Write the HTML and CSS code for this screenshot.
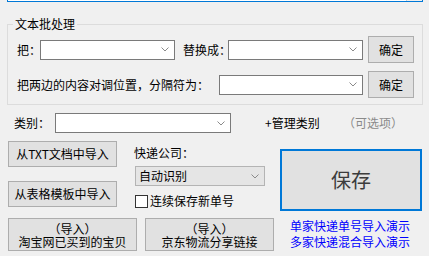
FILE: index.html
```html
<!DOCTYPE html>
<html lang="zh-CN">
<head>
<meta charset="utf-8">
<title>文本批处理</title>
<link rel="stylesheet" href="styles.css">
</head>
<body>
<div class="topbox"><div class="topfill"></div><div class="topside"></div></div>

<fieldset class="group">
  <legend>文本批处理</legend>
  <div class="row">
    <span class="lbl lbl-ba">把：</span>
    <div class="combo w135"><span></span><svg class="chev" width="8" height="5" viewBox="0 0 8 5"><polyline points="0.5,0.5 4,4 7.5,0.5" fill="none" stroke="#8a8a8a" stroke-width="1"/></svg></div>
    <span class="lbl lbl-th">替换成：</span>
    <div class="combo w135"><span></span><svg class="chev" width="8" height="5" viewBox="0 0 8 5"><polyline points="0.5,0.5 4,4 7.5,0.5" fill="none" stroke="#8a8a8a" stroke-width="1"/></svg></div>
    <button class="btn ok">确定</button>
  </div>
  <div class="row row2">
    <span class="lbl lbl-long">把两边的内容对调位置，分隔符为：</span>
    <div class="combo w144"><span></span><svg class="chev" width="8" height="5" viewBox="0 0 8 5"><polyline points="0.5,0.5 4,4 7.5,0.5" fill="none" stroke="#8a8a8a" stroke-width="1"/></svg></div>
    <button class="btn ok">确定</button>
  </div>
</fieldset>

<div class="catrow">
  <span class="lbl lbl-cat">类别：</span>
  <div class="combo w176"><span></span><svg class="chev" width="8" height="5" viewBox="0 0 8 5"><polyline points="0.5,0.5 4,4 7.5,0.5" fill="none" stroke="#8a8a8a" stroke-width="1"/></svg></div>
  <span class="manage">+管理类别</span>
  <span class="optional">（可选项）</span>
</div>

<div class="upper">
  <div class="leftstack">
    <button class="btn imp">从TXT文档中导入</button>
    <button class="btn imp">从表格模板中导入</button>
  </div>
  <div class="midstack">
    <span class="lbl">快递公司：</span>
    <div class="combo dis"><span>自动识别</span><svg class="chev" width="8" height="5" viewBox="0 0 8 5"><polyline points="0.5,0.5 4,4 7.5,0.5" fill="none" stroke="#8a8a8a" stroke-width="1"/></svg></div>
    <label class="check"><span class="box"></span><span>连续保存新单号</span></label>
  </div>
  <button class="btn save">保存</button>
</div>

<div class="lower">
  <button class="btn two"><span class="ln">（导入）</span><span class="ln">淘宝网已买到的宝贝</span></button>
  <button class="btn two"><span class="ln">（导入）</span><span class="ln">京东物流分享链接</span></button>
  <div class="links">
    <a href="#" class="lnk">单家快递单号导入演示</a>
    <a href="#" class="lnk">多家快递混合导入演示</a>
  </div>
</div>
</body>
</html>
```

FILE: styles.css
```css
* { box-sizing: border-box; }
html, body { margin: 0; padding: 0; }
body {
  width: 429px;
  height: 256px;
  overflow: hidden;
  background: #f0f0f0;
  font-family: "Noto Sans CJK SC", "Microsoft YaHei", sans-serif;
  font-size: 12px;
  line-height: 14px;
  color: #000;
}

.topbox {
  margin-left: 7px;
  width: 416px;
  height: 2px;
  border: 1px solid #0078d7;
  border-top: none;
  display: flex;
}
.topfill { flex: 1; background: #fff; }
.topside { width: 16px; background: #f0f0f0; border-left: 1px solid #d0d0d0; }

.group {
  margin: 15px 0 0 7px;
  width: 416px;
  min-width: 0;
  border: 1px solid #dcdcdc;
  padding: 5px 4px 6px 5px;
}
.group legend {
  padding: 0 2px;
  line-height: 14px;
  font-size: 12px;
}

.row {
  display: flex;
  align-items: center;
  height: 27px;
}
.row2 { margin-top: 8px; }

.lbl { white-space: nowrap; flex-shrink: 0; }
.lbl-ba { margin-left: 4px; width: 23px; }
.lbl-th { margin-left: 8px; width: 45px; }
.lbl-long { margin-left: 4px; width: 202px; }
.lbl-cat { margin-left: 14px; width: 41px; }

.combo {
  display: flex;
  align-items: center;
  justify-content: space-between;
  height: 20px;
  background: #fff;
  border: 1px solid #7a7a7a;
  padding: 0 5px 0 3px;
  flex-shrink: 0;
}
.chev { display: block; }
.w135 { width: 135px; }
.w144 { width: 144px; }
.w176 { width: 176px; }

.btn {
  font-family: inherit;
  font-size: 12px;
  line-height: 14px;
  color: #000;
  background: #e1e1e1;
  border: 1px solid #adadad;
  padding: 0;
  margin: 0;
  flex-shrink: 0;
}
.ok { width: 46px; height: 27px; margin-left: 5px; }

.catrow {
  display: flex;
  align-items: center;
  margin-top: 8px;
  height: 20px;
}
.manage { margin-left: 34px; width: 78px; white-space: nowrap; }
.optional { color: #8a8a8a; white-space: nowrap; }

.upper {
  display: flex;
  align-items: flex-start;
  margin-top: 8px;
}
.leftstack {
  margin-left: 8px;
  width: 109px;
  display: flex;
  flex-direction: column;
  gap: 14px;
}
.imp { width: 109px; height: 26px; }

.midstack {
  margin-left: 18px;
  width: 130px;
  display: flex;
  flex-direction: column;
}
.midstack > .lbl { margin-top: 5px; margin-left: -1px; }
.combo.dis {
  margin-top: 6px;
  width: 130px;
  background: #e5e5e5;
  border-color: #b4b4b4;
}
.check {
  display: flex;
  align-items: center;
  margin-top: 8px;
  height: 14px;
}
.box {
  width: 13px;
  height: 13px;
  background: #fff;
  border: 1px solid #333;
  margin-right: 2px;
}

.save {
  margin-left: 15px;
  margin-top: 8px;
  width: 142px;
  height: 62px;
  border: 2px solid #0078d7;
  font-size: 20px;
  line-height: 24px;
  color: #3c3c3c;
}

.lower {
  display: flex;
  align-items: flex-start;
  margin-top: 7px;
}
.two {
  width: 129px;
  height: 33px;
  display: flex;
  flex-direction: column;
  align-items: center;
  justify-content: center;
}
.two .ln {
  display: block;
  line-height: 13px;
  height: 13px;
  white-space: nowrap;
}
.two:first-child { margin-left: 8px; }
.two + .two { margin-left: 8px; }
.links {
  margin-left: 16px;
  display: flex;
  flex-direction: column;
}
.lnk {
  color: #0000ff;
  text-decoration: none;
  line-height: 16px;
  white-space: nowrap;
}
```
